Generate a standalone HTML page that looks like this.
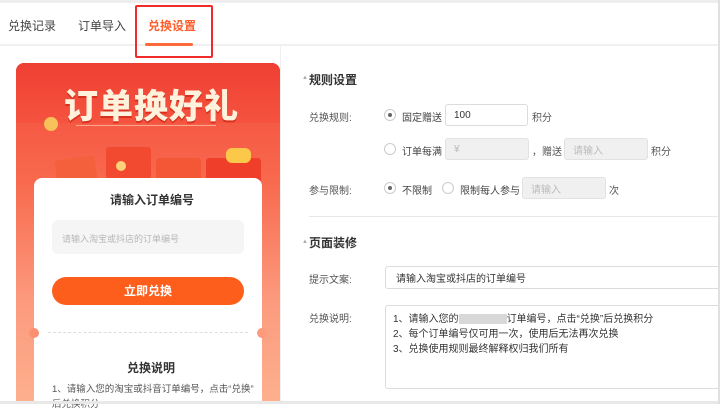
<!DOCTYPE html><html><head><meta charset="utf-8"><style>
*{margin:0;padding:0;box-sizing:border-box}
body{width:720px;height:404px;overflow:hidden;background:#fff;font-family:"Liberation Sans","Noto Sans CJK SC",sans-serif;position:relative;color:#333}
.a{position:absolute;white-space:nowrap}
.t{font-size:12px}
.r{position:absolute;width:12px;height:12px;border:1px solid #ccc;border-radius:50%;background:#fff}
.r.on::after{content:"";position:absolute;left:3px;top:3px;width:4px;height:4px;border-radius:50%;background:#666}
.in{position:absolute;border:1px solid #dcdcdc;border-radius:3px;background:#fff;font-size:10px;color:#333;padding-left:8px;display:flex;align-items:center}
.dis{background:#f0f0f0;color:#bbb;border-color:#e2e2e2}
.lb{font-size:10px;color:#555}
</style></head><body>
<div class="a" style="left:0;top:0;width:720px;height:3px;background:#eee"></div>
<div class="a" style="left:0;top:44px;width:720px;height:2px;background:#f0f0f0"></div>
<div class="a t" style="left:8px;top:17px;color:#444">兑换记录</div>
<div class="a t" style="left:78px;top:17px;color:#444">订单导入</div>
<div class="a t" style="left:148px;top:17px;color:#fd5e2c;font-weight:bold">兑换设置</div>
<div class="a" style="left:145px;top:43px;width:48px;height:3px;background:#fd6a3a;border-radius:2px"></div>
<div class="a" style="left:135px;top:5px;width:78px;height:53px;border:2px solid #f12a2a;border-radius:2px"></div>

<div class="a" style="left:16px;top:63px;width:264px;height:341px;border-radius:8px 8px 0 0;background:linear-gradient(180deg,#f2493a 0%,#f86a4e 35%,#fc9a7e 70%,#fdb08e 100%);overflow:hidden">
 <div class="a" style="left:0;top:0;width:264px;height:60px;background:linear-gradient(180deg,#ee3f33,#f5533f)"></div>
 <div class="a" style="left:48px;top:16px;font-size:34px;font-weight:900;color:#fff2dc;letter-spacing:1px;text-shadow:0 2px 0 #d83020">订单换好礼</div>
 <div class="a" style="left:60px;top:62px;width:140px;height:1px;background:rgba(255,220,190,.6)"></div>
 <div class="a" style="left:40px;top:95px;width:40px;height:25px;background:#f4603c;border-radius:3px;transform:rotate(-8deg)"></div>
 <div class="a" style="left:90px;top:84px;width:45px;height:32px;background:#f24a30;border-radius:3px"></div>
 <div class="a" style="left:140px;top:95px;width:45px;height:25px;background:#f35735;border-radius:3px"></div>
 <div class="a" style="left:190px;top:95px;width:55px;height:25px;background:#ef3e2a;border-radius:3px"></div>
 <div class="a" style="left:210px;top:85px;width:25px;height:15px;background:#fbc84a;border-radius:6px"></div>
 <div class="a" style="left:28px;top:54px;width:14px;height:14px;background:#f9c15a;border-radius:50%"></div>
 <div class="a" style="left:100px;top:98px;width:10px;height:10px;background:#fbd27a;border-radius:50%"></div>
</div>
<div class="a" style="left:34px;top:178px;width:228px;height:226px;background:#fff;border-radius:8px 8px 0 0"></div>
<div class="a" style="left:110px;top:191px;font-size:12px;font-weight:bold;color:#333">请输入订单编号</div>
<div class="a" style="left:52px;top:220px;width:192px;height:34px;background:#f5f5f5;border-radius:6px"></div>
<div class="a" style="left:62px;top:232px;font-size:9px;color:#b8b8b8">请输入淘宝或抖店的订单编号</div>
<div class="a" style="left:52px;top:277px;width:192px;height:28px;background:#fd5e1c;border-radius:14px;color:#fff;font-size:12px;font-weight:bold;text-align:center;line-height:28px">立即兑换</div>
<div class="a" style="left:48px;top:332px;width:200px;border-top:1px dashed #ddd"></div>
<div class="a" style="left:29px;top:328px;width:10px;height:10px;border-radius:50%;background:#fb8f70"></div>
<div class="a" style="left:257px;top:328px;width:10px;height:10px;border-radius:50%;background:#fc9a7c"></div>
<div class="a" style="left:127px;top:359px;font-size:12px;font-weight:bold;color:#333">兑换说明</div>
<div class="a" style="left:52px;top:381px;font-size:9.5px;color:#555">1、请输入您的淘宝或抖音订单编号，点击“兑换”</div>
<div class="a" style="left:52px;top:396px;font-size:9.5px;color:#555">后兑换积分</div>
<div class="a" style="left:280px;top:46px;width:1px;height:358px;background:#efefef"></div>
<div class="a" style="left:0;top:401px;width:720px;height:3px;background:#e8e8e8"></div>

<div class="a" style="left:302px;top:75px;font-size:6px;color:#aaa">▲</div>
<div class="a" style="left:309px;top:71px;font-size:12px;font-weight:bold;color:#333">规则设置</div>
<div class="a lb" style="left:309px;top:109px">兑换规则:</div>
<div class="r on" style="left:384px;top:109px"></div>
<div class="a lb" style="left:402px;top:109px;color:#444">固定赠送</div>
<div class="in" style="left:445px;top:104px;width:83px;height:22px">100</div>
<div class="a lb" style="left:532px;top:109px">积分</div>
<div class="r" style="left:384px;top:143px"></div>
<div class="a lb" style="left:402px;top:143px;color:#444">订单每满</div>
<div class="in dis" style="left:445px;top:138px;width:84px;height:22px">¥</div>
<div class="a lb" style="left:532px;top:143px">，赠送</div>
<div class="in dis" style="left:564px;top:138px;width:84px;height:22px">请输入</div>
<div class="a lb" style="left:651px;top:143px">积分</div>
<div class="a lb" style="left:309px;top:182px">参与限制:</div>
<div class="r on" style="left:384px;top:182px"></div>
<div class="a lb" style="left:402px;top:182px;color:#444">不限制</div>
<div class="r" style="left:442px;top:182px"></div>
<div class="a lb" style="left:460px;top:182px;color:#444">限制每人参与</div>
<div class="in dis" style="left:522px;top:177px;width:84px;height:22px">请输入</div>
<div class="a lb" style="left:609px;top:182px">次</div>
<div class="a" style="left:309px;top:216px;width:411px;height:1px;background:#e8e8e8"></div>
<div class="a" style="left:302px;top:239px;font-size:6px;color:#aaa">▲</div>
<div class="a" style="left:309px;top:234px;font-size:12px;font-weight:bold;color:#333">页面装修</div>
<div class="a lb" style="left:309px;top:271px">提示文案:</div>
<div class="in" style="left:385px;top:266px;width:340px;height:23px;padding-left:10px">请输入淘宝或抖店的订单编号</div>
<div class="a lb" style="left:309px;top:310px">兑换说明:</div>
<div class="a" style="left:385px;top:305px;width:340px;height:84px;border:1px solid #dcdcdc;border-radius:3px"></div>
<div class="a lb" style="left:393px;top:310px;color:#333">1、请输入您的<span style="display:inline-block;width:48px;height:10px;background:#d8d8d8;vertical-align:middle"></span>订单编号，点击“兑换”后兑换积分</div>
<div class="a lb" style="left:393px;top:325px;color:#333">2、每个订单编号仅可用一次，使用后无法再次兑换</div>
<div class="a lb" style="left:393px;top:340px;color:#333">3、兑换使用规则最终解释权归我们所有</div>
<div class="a" style="left:718px;top:0;width:2px;height:404px;background:#e0e0e0"></div>
</body></html>
